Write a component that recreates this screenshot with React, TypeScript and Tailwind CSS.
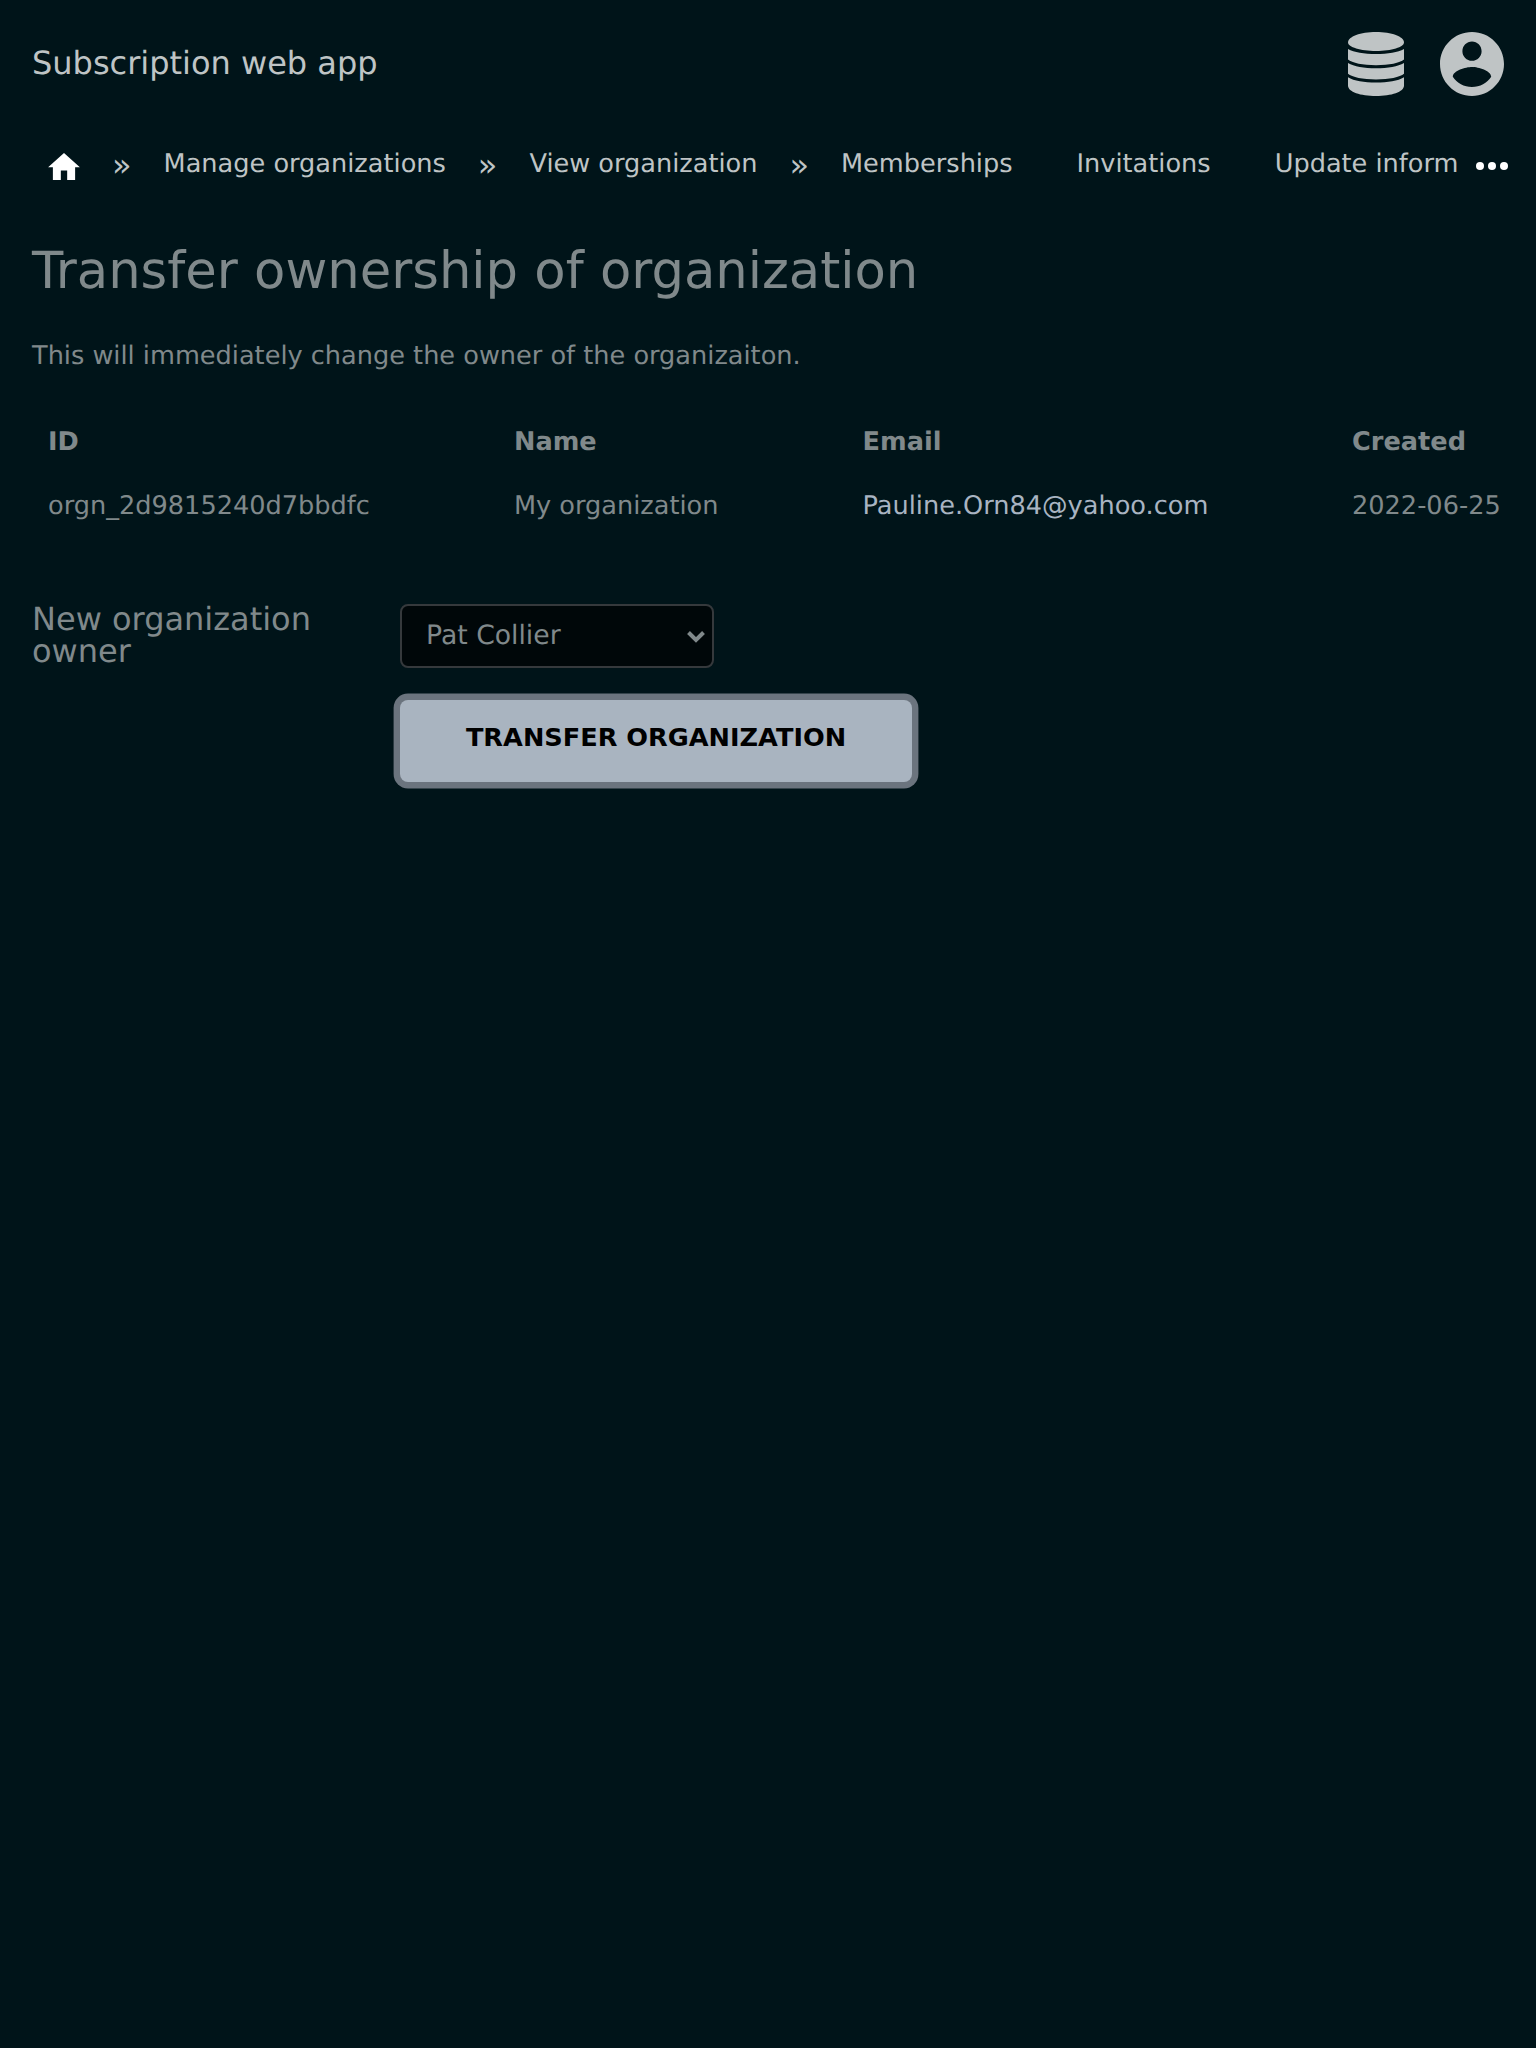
import React from "react";

const crumb = "block whitespace-nowrap px-8 pt-[17px]";

function Separator() {
  return <span className="block shrink-0 pt-[18px] text-[32px]">»</span>;
}

function DatabaseIcon() {
  return (
    <svg className="block h-16 w-14" viewBox="0 0 56 64" fill="currentColor">
      <path d="M28 0C43.500 0 56 4.500 56 10.500C56 15 43.500 19 28 19S0 15 0 10.500C0 4.500 12.500 0 28 0z" />
      <path d="M0 17C6 20.500 16 22 28 22S50 20.500 56 17V27.500C52 31 41 33.200 28 33.200S4 31 0 27.500z" />
      <path d="M0 31C6 34.700 16 36.200 28 36.200S50 34.700 56 31V41.800C52 45.300 41 47.500 28 47.500S4 45.300 0 41.800z" />
      <path d="M0 45.300C6 49 16 50.500 28 50.500S50 49 56 45.300V53.500C56 60 43.500 64 28 64S0 60 0 53.500z" />
    </svg>
  );
}

function AccountIcon() {
  return (
    <svg className="block size-16" viewBox="2 2 20 20" fill="currentColor">
      <path d="M12 2C6.480 2 2 6.480 2 12s4.480 10 10 10 10-4.480 10-10S17.520 2 12 2zm0 3c1.660 0 3 1.340 3 3s-1.340 3-3 3-3-1.340-3-3 1.340-3 3-3zm0 14.200c-2.500 0-4.710-1.280-6-3.220.030-1.990 4-3.080 6-3.080 1.990 0 5.970 1.090 6 3.080-1.290 1.940-3.500 3.220-6 3.220z" />
    </svg>
  );
}

export default function App() {
  return (
    <div className="min-h-[2048px] w-full overflow-hidden bg-[#001419] font-['DejaVu_Sans',sans-serif] text-[25.6px] leading-8 text-[#80898b] [text-rendering:geometricPrecision]">
      <header className="flex h-32 items-center justify-between px-8 text-[#bfc4c5]">
        <span className="pb-0.5 text-[32px]">Subscription web app</span>
        <div className="flex items-center gap-9">
          <DatabaseIcon />
          <AccountIcon />
        </div>
      </header>

      <nav className="flex h-[76px] items-start pl-8 pr-7 text-[#bfc4c5]">
        <div className="flex w-[1426px] pb-4 pt-[3px]">
          <a className="mr-4 block px-4 pt-[21.6px] text-white">
            <svg className="block h-[27px] w-8" viewBox="2 3 20 17" fill="currentColor">
              <path d="M10 20v-6h4v6h5v-8h3L12 3 2 12h3v8z" />
            </svg>
          </a>
          <Separator />
          <a className={crumb}>Manage organizations</a>
          <Separator />
          <a className={crumb}>View organization</a>
          <Separator />
          <a className={crumb}>Memberships</a>
          <a className={crumb}>Invitations</a>
          <a className="block whitespace-nowrap pl-8 pt-[17px]">Update inform</a>
        </div>
        <svg className="ml-[18px] mt-[34px] block h-2 w-8 shrink-0 text-white" viewBox="4 10 16 4" fill="currentColor">
          <circle cx="6" cy="12" r="2" />
          <circle cx="12" cy="12" r="2" />
          <circle cx="18" cy="12" r="2" />
        </svg>
      </nav>

      <main className="px-8 pt-[37px]">
        <h1 className="text-[51.2px] leading-[60px]">Transfer ownership of organization</h1>
        <p className="mt-[39px]">This will immediately change the owner of the organizaiton.</p>

        <table className="mt-[38px] w-full table-fixed border-collapse text-left">
          <colgroup>
            <col className="w-[466px]" />
            <col className="w-[348.5px]" />
            <col className="w-[489.5px]" />
            <col />
          </colgroup>
          <thead>
            <tr>
              <th className="p-4">ID</th>
              <th className="p-4">Name</th>
              <th className="p-4">Email</th>
              <th className="p-4">Created</th>
            </tr>
          </thead>
          <tbody>
            <tr>
              <td className="whitespace-nowrap p-4">orgn_2d9815240d7bbdfc</td>
              <td className="whitespace-nowrap p-4">My organization</td>
              <td className="whitespace-nowrap p-4 text-[#a9b4c2]">Pauline.Orn84@yahoo.com</td>
              <td className="whitespace-nowrap p-4">2022-06-25</td>
            </tr>
          </tbody>
        </table>

        <form className="mt-[66px] flex">
          <label className="-mt-px w-[368px] shrink-0 pr-12 text-[32px] leading-8">New organization owner</label>
          <div className="flex flex-col items-start">
            <div className="flex h-16 w-[314px] items-center justify-between rounded-lg border-2 border-[#35393c] bg-[#000709] pl-6 pr-[7px]">
              <span className="pb-px text-[26.67px]">Pat Collier</span>
              <svg className="mt-px block h-3 w-[18px]" viewBox="0 0 18 12" fill="none" stroke="currentColor" strokeWidth="4">
                <path d="M1.500 1.500L9 9L16.500 1.500" />
              </svg>
            </div>
            <button type="button" className="mt-8 h-[82px] w-[512px] rounded-lg bg-[#a9b4c0] pb-[9px] font-bold text-black shadow-[0_0_0_6.4px_#6b747e]">
              TRANSFER ORGANIZATION
            </button>
          </div>
        </form>
      </main>
    </div>
  );
}
